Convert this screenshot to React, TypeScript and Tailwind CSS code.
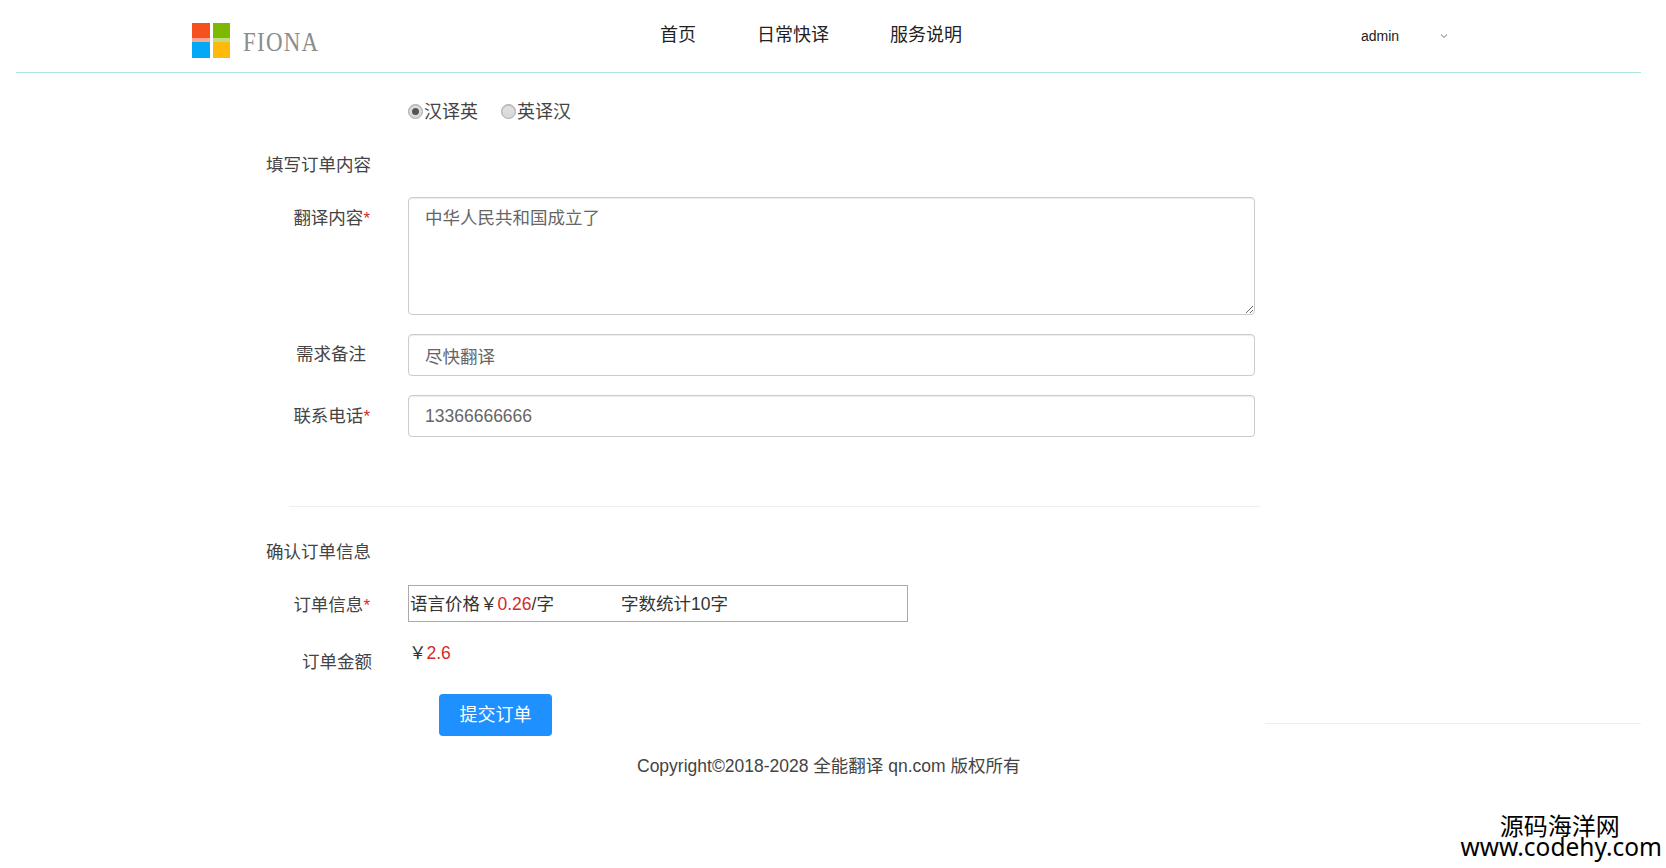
const font = "font-['Liberation_Sans','Noto_Sans_CJK_SC',sans-serif]";

function Star() {
  return <span className="text-[#d42a2a] text-[17px]">*</span>;
}

function Logo() {
  return (
    <svg width="38" height="36" viewBox="0 0 38 36" className="shrink-0">
      <rect x="0" y="0" width="18" height="15" fill="#f4511e" />
      <rect x="21" y="0" width="17" height="15" fill="#7cb900" />
      <rect x="0" y="15" width="18" height="4" fill="#f9a590" />
      <rect x="21" y="15" width="17" height="4" fill="#bedc80" />
      <rect x="0" y="19" width="18" height="16" fill="#03a9f4" />
      <rect x="21" y="19" width="17" height="16" fill="#ffb90a" />
    </svg>
  );
}

function Radio({ checked }: { checked?: boolean }) {
  return (
    <span className="-mt-[2px] flex h-[15px] w-[15px] items-center justify-center rounded-full border border-[#a8a8a8] bg-gradient-to-b from-[#e4e4e4] to-[#d6d6d6] shadow-[inset_0_1px_1px_rgba(0,0,0,0.15)]">
      {checked && <span className="h-[7px] w-[7px] rounded-full bg-[#555]" />}
    </span>
  );
}

function Field({ label, star, pr, children }: { label: string; star?: boolean; pr: string; children: React.ReactNode }) {
  return (
    <div className="flex items-start">
      <label className={`w-[392px] shrink-0 text-right leading-[26px] ${pr}`}>
        {label}
        {star && <Star />}
      </label>
      {children}
    </div>
  );
}

const control =
  "block w-[847px] rounded-[4px] border border-[#ccc] bg-white px-4 text-[17.5px] text-[#666] shadow-[inset_0_1px_1px_rgba(0,0,0,0.075)] outline-none";

export default function App() {
  return (
    <div className={`relative h-[868px] overflow-hidden bg-white pl-4 pr-[25px] text-[17.5px] text-[#444] ${font}`}>
      <header className="flex h-[73px] items-start border-b border-[#a9e6dc]">
        <div className="ml-[176px] mt-[23px] flex w-[468px] shrink-0 items-start">
          <Logo />
          <span className="ml-[13px] mt-[2px] origin-left scale-x-[0.82] font-['Liberation_Serif',serif] text-[28px] leading-[34px] tracking-[1.5px] text-[#8c8c8c]">FIONA</span>
        </div>
        <nav className="mt-[22px] flex gap-[61px] text-[18px] leading-[26px] text-[#222]">
          <a>首页</a>
          <a>日常快译</a>
          <a>服务说明</a>
        </nav>
        <div className="ml-[399px] mt-[26px] flex items-center text-[14px] leading-[20px] text-[#222]">
          <span>admin</span>
          <svg width="8" height="6" viewBox="0 0 8 6" className="ml-[41px]">
            <path d="M1 1.5 L4 4.5 L7 1.5" fill="none" stroke="#aaa" strokeWidth="1.2" />
          </svg>
        </div>
      </header>

      <main>
        <div className="ml-[392px] mt-[25px] flex h-[28px] items-center">
          <Radio checked />
          <span className="ml-[1px] mr-[23px] text-[18px]">汉译英</span>
          <Radio />
          <span className="ml-[1px] text-[18px]">英译汉</span>
        </div>

        <h3 className="ml-[250px] mt-[26px] text-[17.5px] font-normal leading-[26px]">填写订单内容</h3>

        <div className="mt-[19px] flex flex-col gap-[19px]">
          <Field label="翻译内容" star pr="pr-[38px] pt-[8px]">
            <textarea className={`${control} h-[118px] py-[6px] leading-[28px]`} defaultValue="中华人民共和国成立了" />
          </Field>
          <Field label="需求备注" pr="pr-[42px] pt-[7px]">
            <input className={`${control} h-[42px]`} defaultValue="尽快翻译" />
          </Field>
          <Field label="联系电话" star pr="pr-[38px] pt-[8px]">
            <input className={`${control} h-[42px]`} defaultValue="13366666666" />
          </Field>
        </div>

        <div className="ml-[273px] mt-[69px] w-[971px] border-t border-[#eee]" />

        <h3 className="ml-[250px] mt-[32px] text-[17.5px] font-normal leading-[26px]">确认订单信息</h3>

        <div className="mt-[20px] flex items-start">
          <label className="w-[392px] shrink-0 pr-[38px] pt-[7px] text-right leading-[26px]">
            订单信息
            <Star />
          </label>
          <div className="flex h-[37px] w-[500px] items-center border border-[#aaa] pl-[1px] pt-[1px] text-[17.5px] text-[#333]">
            <span>语言价格￥</span>
            <span className="text-[#d42a2a]">0.26</span>
            <span>/字</span>
            <span className="ml-[67px]">字数统计10字</span>
          </div>
        </div>

        <div className="mt-[18px] flex items-start">
          <label className="w-[392px] shrink-0 pr-[36px] pt-[9px] text-right leading-[26px]">订单金额</label>
          <div className="ml-[1px] text-[17.5px] leading-[26px] text-[#333]">
            ￥<span className="text-[#d42a2a]">2.6</span>
          </div>
        </div>

        <div className="mt-[19px] flex items-end">
          <button className="ml-[423px] h-[42px] w-[113px] rounded-[4px] bg-[#1e90ff] text-[18px] text-white">提交订单</button>
          <div className="ml-auto mb-[12px] w-[376px] border-t border-[#eee]" />
        </div>

        <p className="ml-[621px] mt-[17px] text-[17.5px] leading-[26px] text-[#444]">Copyright©2018-2028 全能翻译 qn.com 版权所有</p>
      </main>

      <div className="absolute bottom-[12px] right-[4px] text-center text-black font-['Noto_Sans','Noto_Sans_CJK_SC',sans-serif]">
        <div className="mr-[3px] text-[24px] leading-[22px]">源码海洋网</div>
        <div className="text-[24.5px] leading-[19px]">www.codehy.com</div>
      </div>
    </div>
  );
}
